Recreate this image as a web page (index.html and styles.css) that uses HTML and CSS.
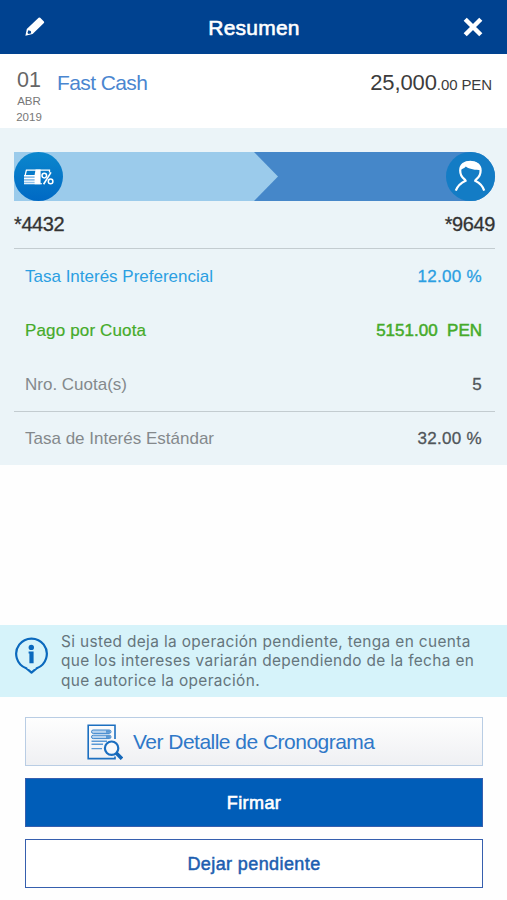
FILE: index.html
```html
<!DOCTYPE html>
<html lang="es">

<head>
    <meta charset="UTF-8">
    <meta name="viewport" content="width=device-width, initial-scale=1">
    <title>Resumen</title>
    <link rel="stylesheet" href="styles.css">
</head>

<body>

    <header class="topbar">
        <svg class="icon-edit" width="20" height="20" viewBox="0 0 20 20">
            <path fill="#fff" fill-rule="evenodd" d="M13.6 0.8 Q14.4 0.1 15.2 0.8 L18.9 4.4 Q19.5 5.1 18.9 5.9 L7.6 17 L0.4 18.7 L1.8 12 Z M3.3 13.2 L2.5 16 L3.6 17 L6.2 16.2 L5.8 13.9 Z" />
        </svg>
        <h1>Resumen</h1>
        <svg class="icon-close" width="20" height="20" viewBox="0 0 20 20">
            <path stroke="#fff" stroke-width="4.4" d="M2.2 2.2 L17.8 17.8 M17.8 2.2 L2.2 17.8" />
        </svg>
    </header>

    <section class="operation">
        <div class="date">
            <span class="day">01</span>
            <span class="month">ABR</span>
            <span class="year">2019</span>
        </div>
        <h2>Fast Cash</h2>
        <div class="amount">25,000<small>.00 PEN</small></div>
    </section>

    <section class="details">
        <div class="flow">
            <div class="flow-from">
                <svg width="49" height="49" viewBox="0 0 49 49">
                    <defs>
                        <linearGradient id="disc" x1="0" y1="0" x2="0" y2="1">
                            <stop offset="0" stop-color="#0b87cd" />
                            <stop offset="1" stop-color="#0069c4" />
                        </linearGradient>
                    </defs>
                    <circle cx="24.5" cy="24.5" r="24.5" fill="url(#disc)" />
                    <path fill="none" stroke="#fff" stroke-width="1.3" d="M11.2 23 L12.4 18.2 H35.5 V20.5" />
                    <path fill="#8fc1ea" d="M10 23.5 H21 V32 H10 Z" />
                    <path fill="none" stroke="#fff" stroke-width="1.1" d="M10 23.6 H21 M10 26.5 H21 M10 29.2 H21 M10 31.8 H28" />
                    <path fill="#fff" d="M21.6 17.6 H26.6 V32.3 H20.6 V23 Z" />
                    <path fill="none" stroke="#fff" stroke-width="1.6" d="M37 20.4 L29.6 32.2" />
                    <circle cx="30.3" cy="23.6" r="2.3" fill="none" stroke="#fff" stroke-width="1.5" />
                    <circle cx="36.6" cy="29.4" r="2.3" fill="none" stroke="#fff" stroke-width="1.5" />
                </svg>
            </div>
            <div class="flow-to">
                <svg width="49" height="49" viewBox="0 0 49 49">
                    <circle cx="24.5" cy="24.5" r="24.5" fill="#137cc5" />
                    <path fill="none" stroke="#fff" stroke-width="2.2" d="M9.8 38.6 C11.5 34 14.5 31 19.6 28.7 C19 26.6 14.2 26 14.2 18.5 C14.2 12.5 18.7 9.8 24.5 9.8 C30.3 9.8 34.6 13 34.6 18.5 C34.6 26 29.8 26.6 29.2 28.7 C33.9 31 36.8 34 38.2 38.6" />
                    <path fill="#fff" d="M14.3 17.5 C14.6 12 18.5 9.2 24.5 9.2 C31 9.2 34.8 12.5 34.8 18.3 C30 18.2 23 17.3 19.8 14.6 C18.8 16 17 17 14.3 17.5 Z" />
                </svg>
            </div>
        </div>
        <div class="accounts">
            <span>*4432</span>
            <span>*9649</span>
        </div>

        <dl class="rates">
            <div class="rate preferred">
                <dt>Tasa Interés Preferencial</dt>
                <dd>12.00 %</dd>
            </div>
            <div class="rate payment">
                <dt>Pago por Cuota</dt>
                <dd>5151.00&nbsp; PEN</dd>
            </div>
            <div class="rate">
                <dt>Nro. Cuota(s)</dt>
                <dd>5</dd>
            </div>
            <div class="rate standard">
                <dt>Tasa de Interés Estándar</dt>
                <dd>32.00 %</dd>
            </div>
        </dl>
    </section>

    <section class="notice">
        <svg width="34" height="38" viewBox="0 0 34 38">
            <path fill="none" stroke="#0b69bd" stroke-width="2.2" stroke-linejoin="round" d="M12.2 31.2 A15.3 15.3 0 1 1 22.8 31.2 L17.5 35.6 Z" />
            <path stroke="#d6f3fa" stroke-width="2.6" d="M13.6 30.6 H21.4" />
            <circle cx="17.3" cy="10.4" r="2.7" fill="#0b69bd" />
            <path fill="#0b69bd" d="M14.6 14.6 H19.6 V26.2 H15.4 V16.4 H14.6 Z" />
        </svg>
        <p>Si usted deja la operación pendiente, tenga en cuenta<br>que los intereses variarán dependiendo de la fecha en<br>que autorice la operación.</p>
    </section>

    <div class="actions">
        <button class="btn btn-schedule">
            <svg width="36" height="36" viewBox="0 0 36 36">
                <path fill="none" stroke="#1c6fc0" stroke-width="1.6" d="M28 15 V1.2 H1.2 V34.6 H28 V32.4" />
                <g fill="#b9d4ef" stroke="#3d86cd" stroke-width="1">
                    <rect x="4.5" y="6" width="19.5" height="3.4" rx="1.7" />
                    <rect x="4.5" y="11.2" width="19.5" height="3.4" rx="1.7" />
                </g>
                <path stroke="#5c9ad6" stroke-width="1.4" d="M4.5 17.3 H20 M4.5 20.3 H16 M4.5 24.6 H15" />
                <path fill="#1c6fc0" d="M19 6.6 H23 V8.8 H19 Z M19 11.8 H23 V14 H19 Z" opacity=".6" />
                <circle cx="24.6" cy="24.2" r="6.7" fill="#f8f9fb" stroke="#1c6fc0" stroke-width="2.2" />
                <path stroke="#1567b8" stroke-width="3.6" d="M29.2 29 L35 34.8" />
            </svg>
            <span>Ver Detalle de Cronograma</span>
        </button>
        <button class="btn btn-primary">Firmar</button>
        <button class="btn btn-outline">Dejar pendiente</button>
    </div>

</body>

</html>
```
FILE: styles.css
```css
* {
    box-sizing: border-box;
}

body {
    margin: 0;
    height: 900px;
    display: flex;
    flex-direction: column;
    background-color: #fefefe;
    font-family: "Liberation Sans", Arial, sans-serif;
    color: #333;
}

h1, h2, p, dl, dd {
    margin: 0;
}

svg {
    display: block;
    fill: none;
}

/* Header */
.topbar {
    height: 54px;
    padding: 0 24px 0 25px;
    display: flex;
    align-items: center;
    justify-content: space-between;
    background-color: #004290;
    color: #fff;
}

.topbar h1 {
    font-size: 21px;
    font-weight: normal;
    line-height: 24px;
    letter-spacing: 0.2px;
    padding-top: 2px;
    -webkit-text-stroke: 0.6px;
}

/* Operation row */
.operation {
    height: 74px;
    padding: 14px 15px 0 13px;
    display: flex;
    background-color: #fff;
}

.date {
    width: 32px;
    display: flex;
    flex-direction: column;
    align-items: center;
    color: #777;
    font-size: 11.5px;
    line-height: 16px;
}

.day {
    font-size: 21.5px;
    line-height: 25px;
    color: #666;
}

.operation h2 {
    margin-left: 12px;
    font-size: 21px;
    font-weight: normal;
    line-height: 29px;
    letter-spacing: -0.6px;
    color: #4a86d0;
}

.amount {
    margin-left: auto;
    font-size: 22px;
    line-height: 29px;
    letter-spacing: -0.1px;
    color: #3c3c3c;
}

.amount small {
    font-size: 15px;
}

/* Details panel */
.details {
    height: 337px;
    padding: 24px 12px 0 14px;
    background-color: #ebf4f8;
}

.flow {
    height: 49px;
    display: flex;
    border-radius: 0 25px 25px 0;
    background-color: #4587c9;
}

.flow-from {
    width: 264px;
    background-color: #9bcbeb;
    clip-path: polygon(0 0, 240px 0, 100% 50%, 240px 100%, 0 100%);
}

.flow-to {
    margin-left: auto;
}

.accounts {
    height: 48px;
    display: flex;
    justify-content: space-between;
    font-size: 20px;
    line-height: 46px;
    letter-spacing: -0.4px;
    border-bottom: 1px solid #c3ccd0;
    -webkit-text-stroke: 0.3px;
}

.rate {
    height: 54px;
    padding: 0 13px 0 11px;
    display: flex;
    justify-content: space-between;
    font-size: 17px;
    line-height: 56px;
    color: #84898c;
}

.rate dd {
    color: #50565a;
    letter-spacing: 0.3px;
    -webkit-text-stroke: 0.3px;
}

.rate.preferred,
.rate.preferred dd {
    color: #2b9fe2;
}

.rate.payment,
.rate.payment dd {
    color: #45ab2a;
}

.rate.payment dt {
    letter-spacing: 0.15px;
    -webkit-text-stroke: 0.2px;
}

.rate.payment dd {
    letter-spacing: 0;
    -webkit-text-stroke: 0.5px;
}

.rate.standard {
    border-top: 1px solid #c3ccd0;
    line-height: 54px;
}

/* Notice */
.notice {
    height: 72px;
    margin-top: 160px;
    padding: 7px 14px 0;
    display: flex;
    align-items: flex-start;
    background-color: #d6f3fa;
}

.notice svg {
    margin-top: 5px;
    flex-shrink: 0;
}

.notice p {
    margin-left: 13px;
    font-family: Inter, sans-serif;
    font-size: 15.4px;
    line-height: 19.3px;
    letter-spacing: 0.36px;
    white-space: nowrap;
    color: #65757c;
}

/* Buttons */
.actions {
    padding: 20px 24px 0 25px;
    display: flex;
    flex-direction: column;
    gap: 12px;
}

.btn {
    height: 49px;
    padding: 2px 0 0;
    display: flex;
    align-items: center;
    justify-content: center;
    border: 1px solid #365fae;
    border-radius: 0;
    font-family: inherit;
    font-size: 18px;
    letter-spacing: 0.4px;
}

.btn-schedule {
    justify-content: flex-start;
    padding: 0 0 0 61px;
    gap: 10px;
    border-color: #b9cde4;
    background: linear-gradient(#fefefe, #eff0f3);
    font-size: 21px;
    letter-spacing: -0.52px;
    color: #2f78c8;
}

.btn-primary {
    background-color: #005db8;
    color: #fff;
    -webkit-text-stroke: 0.6px;
}

.btn-outline {
    background-color: #fff;
    color: #1d5eb0;
    -webkit-text-stroke: 0.5px;
}
```
